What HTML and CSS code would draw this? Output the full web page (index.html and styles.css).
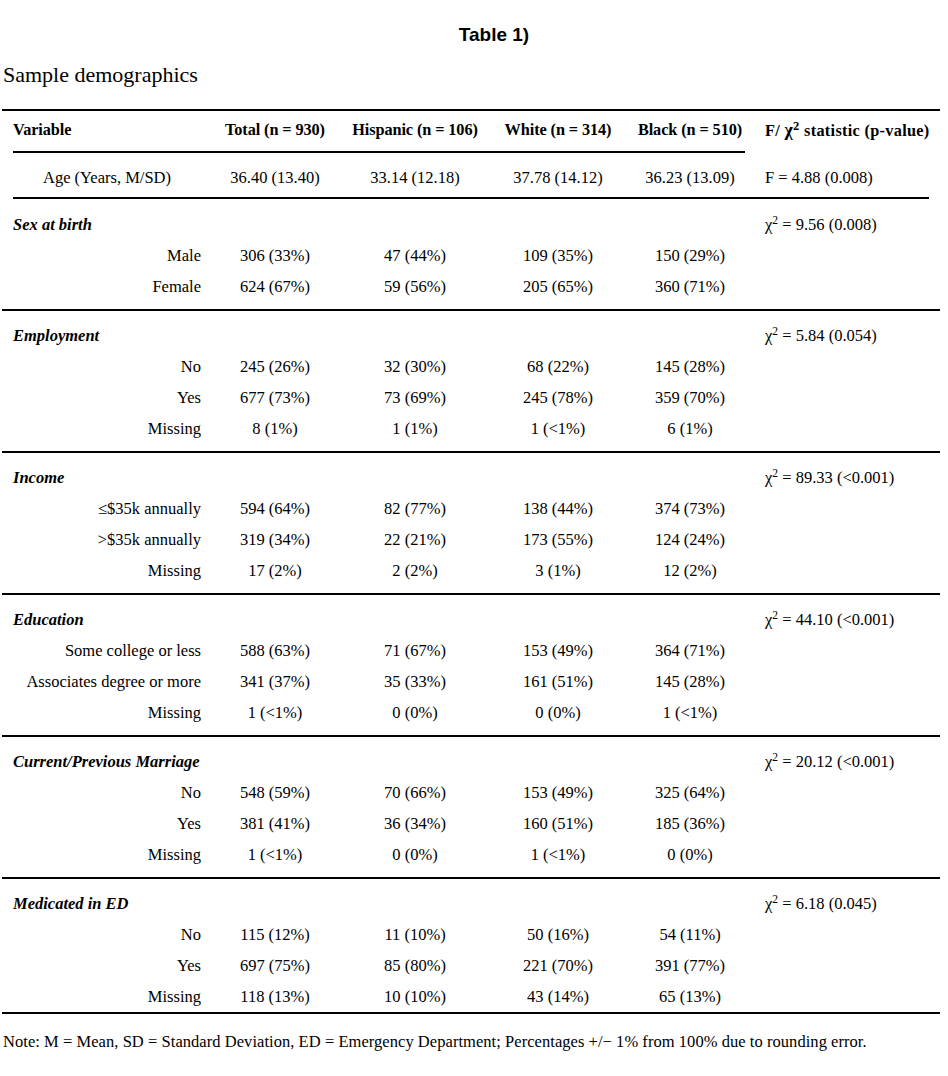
FILE: index.html
```html
<!DOCTYPE html>
<html lang="en">
  <head>
    <meta charset="UTF-8" />
    <meta name="viewport" content="width=device-width, initial-scale=1.0" />
    <title>Table 1) Sample demographics</title>
    <link rel="stylesheet" href="styles.css">
  </head>
  <body>
    <h1 class="table-no">Table 1)</h1>
    <p class="caption">Sample demographics</p>

    <table class="demo">
      <colgroup>
        <col class="c-pad" />
        <col class="c-var" />
        <col class="c-total" />
        <col class="c-hisp" />
        <col class="c-white" />
        <col class="c-black" />
        <col class="c-stat" />
        <col class="c-pad" />
      </colgroup>
      <thead>
        <tr>
          <th class="pad"></th>
          <th class="var ruled">Variable</th>
          <th class="ruled">Total (n = 930)</th>
          <th class="ruled">Hispanic (n = 106)</th>
          <th class="ruled">White (n = 314)</th>
          <th class="ruled">Black (n = 510)</th>
          <th class="stat">F/ <span class="chi">χ<sup>2</sup></span> statistic (p-value)</th>
          <th class="pad"></th>
        </tr>
      </thead>
      <tbody>
        <tr class="age">
          <td class="pad"></td>
          <td class="age-label ruled">Age (Years, M/SD)</td>
          <td class="ruled">36.40 (13.40)</td>
          <td class="ruled">33.14 (12.18)</td>
          <td class="ruled">37.78 (14.12)</td>
          <td class="ruled">36.23 (13.09)</td>
          <td class="stat ruled">F = 4.88 (0.008)</td>
          <td class="pad"></td>
        </tr>
      </tbody>

      <tbody class="group first-group">
        <tr class="head">
          <td></td>
          <td class="group-name">Sex at birth</td>
          <td></td><td></td><td></td><td></td>
          <td class="stat">χ<sup>2</sup> = 9.56 (0.008)</td>
          <td></td>
        </tr>
        <tr>
          <td></td><td class="level">Male</td>
          <td>306 (33%)</td><td>47 (44%)</td><td>109 (35%)</td><td>150 (29%)</td>
          <td></td><td></td>
        </tr>
        <tr class="last">
          <td></td><td class="level">Female</td>
          <td>624 (67%)</td><td>59 (56%)</td><td>205 (65%)</td><td>360 (71%)</td>
          <td></td><td></td>
        </tr>
      </tbody>

      <tbody class="group">
        <tr class="head">
          <td></td>
          <td class="group-name">Employment</td>
          <td></td><td></td><td></td><td></td>
          <td class="stat">χ<sup>2</sup> = 5.84 (0.054)</td>
          <td></td>
        </tr>
        <tr>
          <td></td><td class="level">No</td>
          <td>245 (26%)</td><td>32 (30%)</td><td>68 (22%)</td><td>145 (28%)</td>
          <td></td><td></td>
        </tr>
        <tr>
          <td></td><td class="level">Yes</td>
          <td>677 (73%)</td><td>73 (69%)</td><td>245 (78%)</td><td>359 (70%)</td>
          <td></td><td></td>
        </tr>
        <tr class="last">
          <td></td><td class="level">Missing</td>
          <td>8 (1%)</td><td>1 (1%)</td><td>1 (&lt;1%)</td><td>6 (1%)</td>
          <td></td><td></td>
        </tr>
      </tbody>

      <tbody class="group">
        <tr class="head">
          <td></td>
          <td class="group-name">Income</td>
          <td></td><td></td><td></td><td></td>
          <td class="stat">χ<sup>2</sup> = 89.33 (&lt;0.001)</td>
          <td></td>
        </tr>
        <tr>
          <td></td><td class="level">≤$35k annually</td>
          <td>594 (64%)</td><td>82 (77%)</td><td>138 (44%)</td><td>374 (73%)</td>
          <td></td><td></td>
        </tr>
        <tr>
          <td></td><td class="level">&gt;$35k annually</td>
          <td>319 (34%)</td><td>22 (21%)</td><td>173 (55%)</td><td>124 (24%)</td>
          <td></td><td></td>
        </tr>
        <tr class="last">
          <td></td><td class="level">Missing</td>
          <td>17 (2%)</td><td>2 (2%)</td><td>3 (1%)</td><td>12 (2%)</td>
          <td></td><td></td>
        </tr>
      </tbody>

      <tbody class="group">
        <tr class="head">
          <td></td>
          <td class="group-name">Education</td>
          <td></td><td></td><td></td><td></td>
          <td class="stat">χ<sup>2</sup> = 44.10 (&lt;0.001)</td>
          <td></td>
        </tr>
        <tr>
          <td></td><td class="level">Some college or less</td>
          <td>588 (63%)</td><td>71 (67%)</td><td>153 (49%)</td><td>364 (71%)</td>
          <td></td><td></td>
        </tr>
        <tr>
          <td></td><td class="level">Associates degree or more</td>
          <td>341 (37%)</td><td>35 (33%)</td><td>161 (51%)</td><td>145 (28%)</td>
          <td></td><td></td>
        </tr>
        <tr class="last">
          <td></td><td class="level">Missing</td>
          <td>1 (&lt;1%)</td><td>0 (0%)</td><td>0 (0%)</td><td>1 (&lt;1%)</td>
          <td></td><td></td>
        </tr>
      </tbody>

      <tbody class="group">
        <tr class="head">
          <td></td>
          <td class="group-name">Current/Previous Marriage</td>
          <td></td><td></td><td></td><td></td>
          <td class="stat">χ<sup>2</sup> = 20.12 (&lt;0.001)</td>
          <td></td>
        </tr>
        <tr>
          <td></td><td class="level">No</td>
          <td>548 (59%)</td><td>70 (66%)</td><td>153 (49%)</td><td>325 (64%)</td>
          <td></td><td></td>
        </tr>
        <tr>
          <td></td><td class="level">Yes</td>
          <td>381 (41%)</td><td>36 (34%)</td><td>160 (51%)</td><td>185 (36%)</td>
          <td></td><td></td>
        </tr>
        <tr class="last">
          <td></td><td class="level">Missing</td>
          <td>1 (&lt;1%)</td><td>0 (0%)</td><td>1 (&lt;1%)</td><td>0 (0%)</td>
          <td></td><td></td>
        </tr>
      </tbody>

      <tbody class="group final-group">
        <tr class="head">
          <td></td>
          <td class="group-name">Medicated in ED</td>
          <td></td><td></td><td></td><td></td>
          <td class="stat">χ<sup>2</sup> = 6.18 (0.045)</td>
          <td></td>
        </tr>
        <tr>
          <td></td><td class="level">No</td>
          <td>115 (12%)</td><td>11 (10%)</td><td>50 (16%)</td><td>54 (11%)</td>
          <td></td><td></td>
        </tr>
        <tr>
          <td></td><td class="level">Yes</td>
          <td>697 (75%)</td><td>85 (80%)</td><td>221 (70%)</td><td>391 (77%)</td>
          <td></td><td></td>
        </tr>
        <tr class="last">
          <td></td><td class="level">Missing</td>
          <td>118 (13%)</td><td>10 (10%)</td><td>43 (14%)</td><td>65 (13%)</td>
          <td></td><td></td>
        </tr>
      </tbody>
    </table>

    <p class="note">
      Note: M = Mean, SD = Standard Deviation, ED = Emergency Department; Percentages +/− 1% from 100% due to rounding error.
    </p>
  </body>
</html>
```

FILE: styles.css
```css
* {
  margin: 0;
  padding: 0;
  box-sizing: border-box;
}

body {
  background: #fff;
  color: #000;
  font-family: "Liberation Serif", "Times New Roman", serif;
}

.table-no {
  margin-top: 24px;
  padding-left: 40px;
  text-align: center;
  font-family: "Liberation Sans", Arial, sans-serif;
  font-size: 19px;
  font-weight: bold;
  line-height: 22px;
}

.caption {
  margin: 16px 0 0 3px;
  font-size: 22px;
  line-height: 26px;
}

/* main table */
.demo {
  margin: 21px 0 0 2px;
  width: 938px;
  table-layout: fixed;
  border-collapse: separate;
  border-spacing: 0;
  font-size: 16.5px;
}

.c-pad { width: 11px; }
.c-var { width: 188px; }
.c-total { width: 148px; }
.c-hisp { width: 132px; }
.c-white { width: 154px; }
.c-black { width: 110px; }
.c-stat { width: 184px; }

.demo th,
.demo td {
  padding: 0;
  text-align: center;
  vertical-align: middle;
  white-space: nowrap;
  font-weight: normal;
}

.demo th {
  height: 44px;
  padding-bottom: 3px;
  border-top: 2px solid #000;
  font-size: 16.3px;
  font-weight: bold;
  letter-spacing: -0.1px;
}

.demo th.ruled {
  border-bottom: 2px solid #000;
}

.demo th.var {
  text-align: left;
}

.demo .stat {
  text-align: left;
  padding-left: 20px;
}

.demo th.stat {
  letter-spacing: 0.3px;
}

.chi {
  font-size: 18px;
}

sup {
  font-size: 0.7em;
  line-height: 0;
  vertical-align: 0.5em;
}

/* age row */
.age td {
  height: 46px;
  padding-top: 5px;
}

.age td.ruled {
  border-bottom: 2px solid #000;
}

/* grouped rows */
.group td {
  line-height: 31px;
  height: 31px;
}

.group .head td {
  padding-top: 9px;
  height: 42px;
  border-top: 2px solid #000;
}

.first-group .head td {
  border-top: none;
  padding-top: 9px;
  height: 41px;
}

.group .last td {
  padding-bottom: 7px;
  height: 38px;
}

.final-group .last td {
  padding-bottom: 0;
  border-bottom: 2px solid #000;
  height: 31px;
}

.demo .group-name {
  text-align: left;
  font-weight: bold;
  font-style: italic;
}

.demo .level {
  text-align: right;
}

.note {
  margin: 18px 0 0 3px;
  font-size: 16.5px;
  line-height: 20px;
  letter-spacing: 0.05px;
}
```
